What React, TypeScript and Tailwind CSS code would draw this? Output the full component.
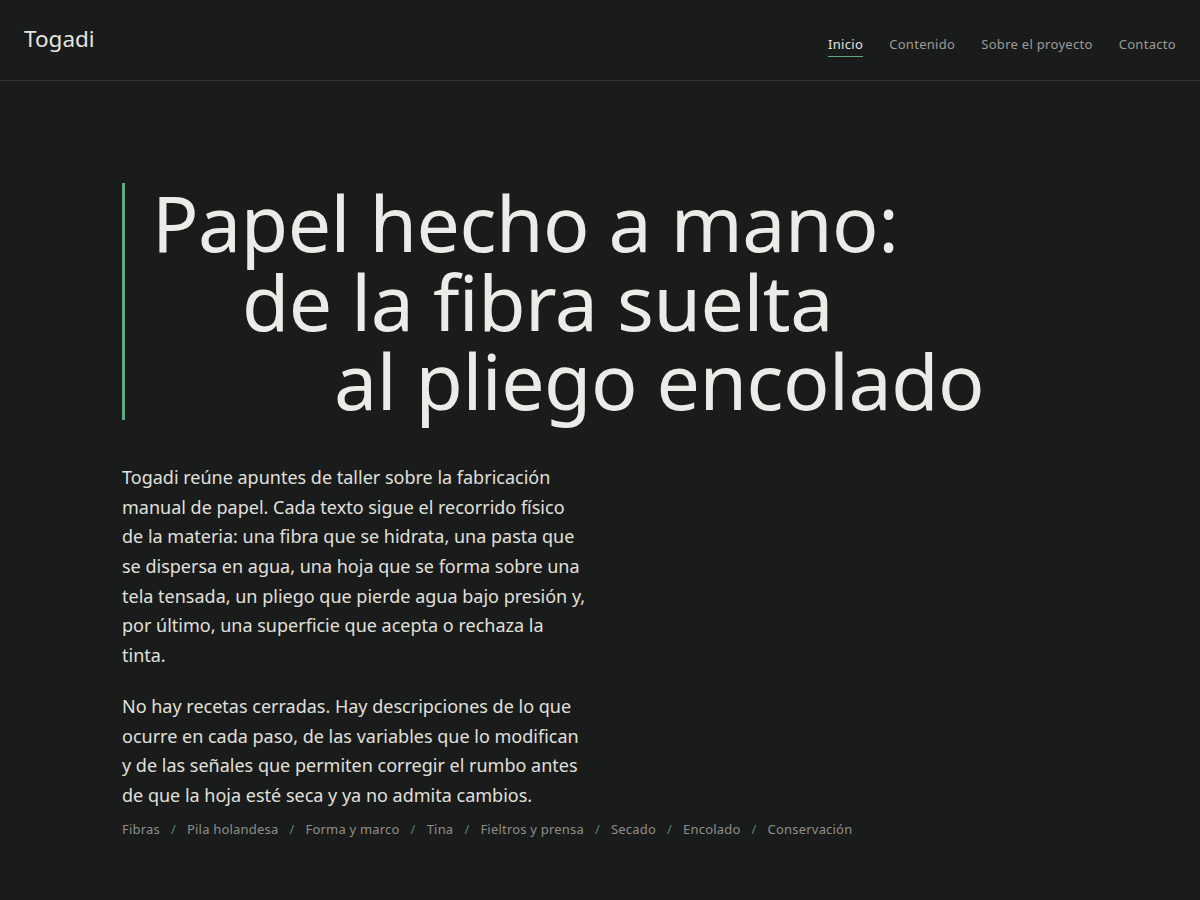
import React from "react";

const nav = ["Inicio", "Contenido", "Sobre el proyecto", "Contacto"];
const crumbs = [
  "Fibras",
  "Pila holandesa",
  "Forma y marco",
  "Tina",
  "Fieltros y prensa",
  "Secado",
  "Encolado",
  "Conservación",
];

export default function App() {
  return (
    <div
      className="min-h-[900px] bg-[#1a1b1b] text-[#e6e6e2]"
      style={{ fontFamily: '"Noto Sans", "Open Sans", sans-serif' }}
    >
      <header className="h-[81px] border-b border-[#333535] flex items-center justify-between px-6">
        <div className="text-[22.5px] text-[#e4e4e0] leading-none -mt-[2px]">Togadi</div>
        <nav className="flex items-center gap-[26px] text-[13px] tracking-[0.3px]">
          {nav.map((n, i) => (
            <a
              key={n}
              className={
                i === 0
                  ? "text-[#e4e4e0] border-b border-[#5fa882] pb-[2px] mt-[12px]"
                  : "text-[#9c9c98] pb-[2px] mt-[12px] border-b border-transparent"
              }
            >
              {n}
            </a>
          ))}
        </nav>
      </header>
      <main className="pl-[122px] pt-[102px]">
        <h1 className="border-l-[3px] border-[#5fa882] pl-[27px] text-[77px] leading-[79px] font-normal text-[#ebebe7] tracking-[-0.5px]">
          <div>Papel hecho a mano:</div>
          <div className="pl-[90px]">de la fibra suelta</div>
          <div className="pl-[182px]">al pliego encolado</div>
        </h1>
        <div className="mt-[43px] w-[466px] text-[18px] leading-[1.65] text-[#e0e0dc]">
          <p>
            Togadi reúne apuntes de taller sobre la fabricación manual de papel. Cada texto sigue el
            recorrido físico de la materia: una fibra que se hidrata, una pasta que se dispersa en
            agua, una hoja que se forma sobre una tela tensada, un pliego que pierde agua bajo
            presión y, por último, una superficie que acepta o rechaza la tinta.
          </p>
          <p className="mt-[21px]">
            No hay recetas cerradas. Hay descripciones de lo que ocurre en cada paso, de las
            variables que lo modifican y de las señales que permiten corregir el rumbo antes de que
            la hoja esté seca y ya no admita cambios.
          </p>
        </div>
        <div className="mt-[8px] flex items-center text-[13px] tracking-[0.2px] text-[#8e8e8a] leading-[20px]">
          {crumbs.map((c, i) => (
            <React.Fragment key={c}>
              {i > 0 && <span className="mx-[11px] text-[#4f8a6c]">/</span>}
              <span>{c}</span>
            </React.Fragment>
          ))}
        </div>
      </main>
    </div>
  );
}
